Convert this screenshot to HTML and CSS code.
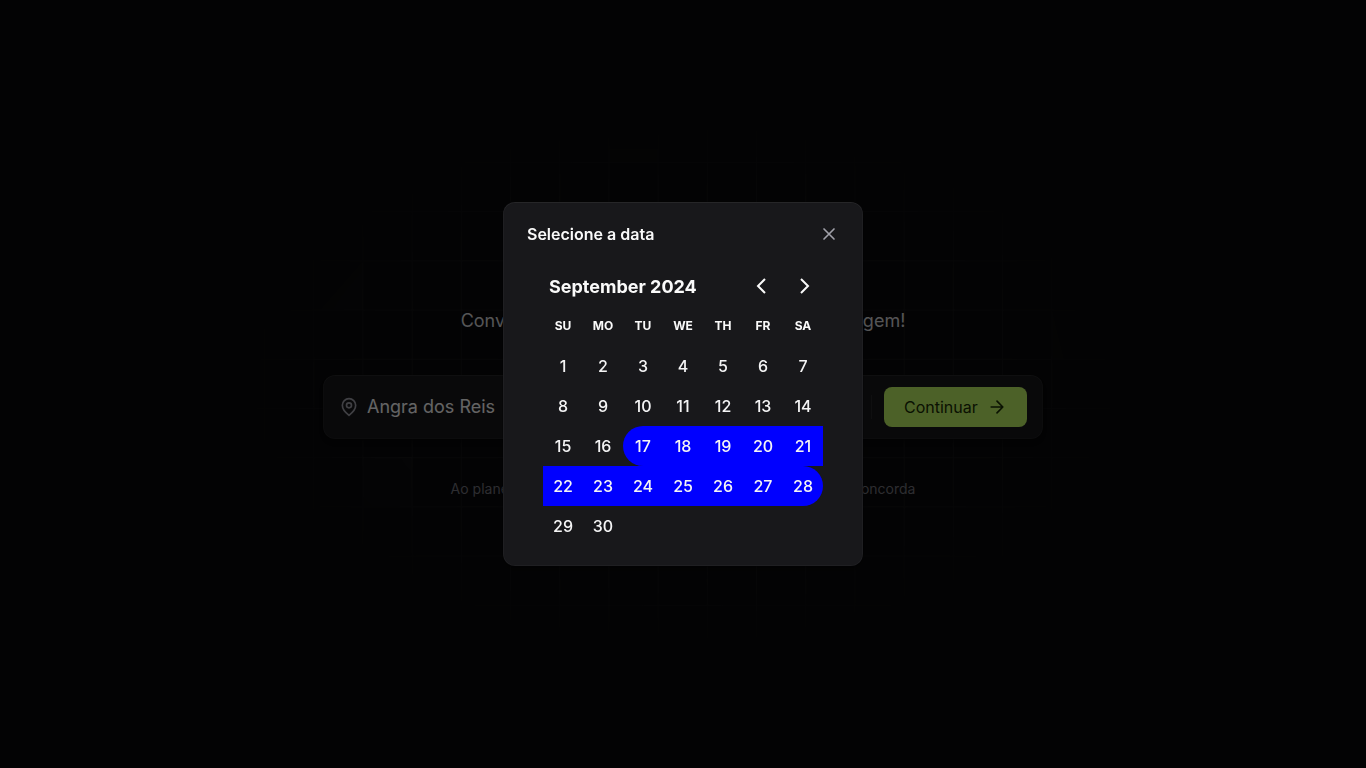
FILE: index.html
```html
<!DOCTYPE html>
<html lang="pt-BR">
<head>
<meta charset="UTF-8">
<meta name="viewport" content="width=device-width, initial-scale=1">
<title>plann.er</title>
<link rel="stylesheet" href="styles.css">
</head>
<body>
<div class="page">
  <svg class="pattern" width="900" height="540" viewBox="0 0 900 540" aria-hidden="true">
    <defs>
      <pattern id="grid" width="49.2" height="49.2" patternUnits="userSpaceOnUse" x="31" y="48">
        <path d="M0.5 0V49.2M0 0.5H49.2" stroke="#fff" stroke-opacity=".045" fill="none"/>
      </pattern>
      <radialGradient id="fade"><stop offset=".65" stop-color="#fff"/><stop offset="1" stop-color="#000"/></radialGradient>
      <mask id="fade-mask"><rect width="900" height="540" fill="url(#fade)"/></mask>
    </defs>
    <g mask="url(#fade-mask)">
      <rect width="900" height="540" fill="url(#grid)"/>
      <path d="M376 35h49v13h-49zM130 147v49H87zM130 343h49v49h-49zM819 196l12 49h-12z" fill="#fff" fill-opacity=".02"/>
    </g>
  </svg>
  <main class="hero">
    <p class="lead">Convide seus amigos e planeje sua próxima viagem!</p>
    <form class="trip-bar">
      <label class="place">
        <svg class="icon" viewBox="0 0 24 24" aria-hidden="true"><path d="M20 10c0 6-8 12-8 12s-8-6-8-12a8 8 0 0 1 16 0Z"/><circle cx="12" cy="10" r="3"/></svg>
        <input class="place-input" type="text" aria-label="Para onde você vai?" value="Angra dos Reis">
      </label>
      <span class="divider"></span>
      <button class="continue" type="button">Continuar
        <svg class="icon" viewBox="0 0 24 24" aria-hidden="true"><path d="M5 12h14M12 5l7 7-7 7"/></svg>
      </button>
    </form>
    <p class="terms">Ao planejar sua viagem pela plann.er você automaticamente concorda</p>
  </main>
</div>
<div class="overlay">
  <section class="dialog" role="dialog" aria-modal="true" aria-labelledby="dialog-title">
    <header class="dialog-head">
      <h2 class="dialog-title" id="dialog-title">Selecione a data</h2>
      <button class="close" type="button" aria-label="Fechar"><svg class="icon" viewBox="0 0 24 24" aria-hidden="true"><path d="M18 6 6 18M6 6l12 12"/></svg></button>
    </header>
    <div class="calendar">
      <div class="month-bar">
        <h3 class="month" id="month">September 2024</h3>
        <button class="nav" type="button" aria-label="Previous month"><svg class="chevron" viewBox="0 0 24 24"><path d="M14 5l-7 7 7 7"/></svg></button>
        <button class="nav" type="button" aria-label="Next month"><svg class="chevron" viewBox="0 0 24 24"><path d="M10 5l7 7-7 7"/></svg></button>
      </div>
      <table class="days" aria-labelledby="month">
        <thead><tr><th>SU</th><th>MO</th><th>TU</th><th>WE</th><th>TH</th><th>FR</th><th>SA</th></tr></thead>
        <tbody>
          <tr><td><button class="day">1</button></td><td><button class="day">2</button></td><td><button class="day">3</button></td><td><button class="day">4</button></td><td><button class="day">5</button></td><td><button class="day">6</button></td><td><button class="day">7</button></td></tr>
          <tr><td><button class="day">8</button></td><td><button class="day">9</button></td><td><button class="day">10</button></td><td><button class="day">11</button></td><td><button class="day">12</button></td><td><button class="day">13</button></td><td><button class="day">14</button></td></tr>
          <tr><td><button class="day">15</button></td><td><button class="day">16</button></td><td class="picked first"><button class="day">17</button></td><td class="picked"><button class="day">18</button></td><td class="picked"><button class="day">19</button></td><td class="picked"><button class="day">20</button></td><td class="picked"><button class="day">21</button></td></tr>
          <tr><td class="picked"><button class="day">22</button></td><td class="picked"><button class="day">23</button></td><td class="picked"><button class="day">24</button></td><td class="picked"><button class="day">25</button></td><td class="picked"><button class="day">26</button></td><td class="picked"><button class="day">27</button></td><td class="picked last"><button class="day">28</button></td></tr>
          <tr><td><button class="day">29</button></td><td><button class="day">30</button></td><td></td><td></td><td></td><td></td><td></td></tr>
        </tbody>
      </table>
    </div>
  </section>
</div>
</body>
</html>
```
FILE: styles.css
```css
*, *::before, *::after { box-sizing: border-box; }
body {
  margin: 0;
  background: #09090b;
  color: #fafafa;
  font: 16px/24px Inter, "Liberation Sans", sans-serif;
}
h2, h3, p { margin: 0; }
button, input { font: inherit; color: inherit; background: none; border: 0; padding: 0; margin: 0; }
button { cursor: pointer; }
.icon { width: 20px; height: 20px; fill: none; stroke: currentColor; stroke-width: 2; stroke-linecap: round; stroke-linejoin: round; }
.page { display: grid; place-items: center; min-height: 100vh; overflow: hidden; }
.pattern, .hero { grid-area: 1 / 1; }
.hero {
  display: flex;
  flex-direction: column;
  gap: 40px;
  width: 100%;
  max-width: 768px;
  padding: 58px 24px 20px;
  text-align: center;
  z-index: 1;
}
.lead { color: #d4d4d8; font-size: 18px; line-height: 28px; }
.trip-bar {
  display: flex;
  align-items: center;
  gap: 12px;
  height: 64px;
  padding: 0 16px;
  border-radius: 12px;
  background: #18181b;
}
.trip-bar, .dialog {
  box-shadow: 0 8px 8px rgba(0,0,0,.1), 0 4px 4px rgba(0,0,0,.1), 0 2px 2px rgba(0,0,0,.1), 0 0 0 1px rgba(0,0,0,.1), inset 0 0 0 1px rgba(255,255,255,.03), inset 0 1px 0 rgba(255,255,255,.03);
}
.place { display: flex; flex: 1; align-items: center; gap: 8px; color: #a1a1aa; }
.place-input { flex: 1; min-width: 0; color: #fafafa; font-size: 18px; line-height: 28px; outline: none; }
.divider { width: 1px; height: 24px; background: #27272a; }
.continue {
  display: flex;
  align-items: center;
  justify-content: space-between;
  gap: 8px;
  min-width: 143px;
  height: 40px;
  padding: 0 20px;
  border-radius: 8px;
  background: #bef264;
  color: #1a2e05;
}
.terms { color: #71717a; font-size: 14px; line-height: 20px; }
.overlay {
  position: fixed;
  inset: 0;
  z-index: 2;
  display: flex;
  align-items: center;
  justify-content: center;
  background: rgba(0,0,0,.6);
}
.dialog { padding: 20px 24px; border-radius: 12px; background: #18181b; }
.dialog-head { display: flex; align-items: center; justify-content: space-between; }
.dialog-title { font-size: 16px; line-height: 24px; font-weight: 600; }
.close { display: flex; padding: 0; color: #a1a1aa; }
.calendar { margin: 20px 16px 0; }
.month-bar { display: flex; align-items: center; height: 40px; }
.month { flex: 1; padding: 2px 0 0 6px; font-size: 18px; line-height: 28px; font-weight: 700; }
.nav { display: grid; place-items: center; width: 40px; height: 40px; }
.chevron { width: 24px; height: 24px; fill: none; stroke: currentColor; stroke-width: 2; }
.days { border-collapse: collapse; }
.days th { width: 40px; height: 40px; padding: 0; font-size: 12px; line-height: 16px; font-weight: 700; }
.days td { width: 40px; height: 40px; padding: 0; }
.day { display: block; width: 40px; height: 40px; font-weight: 500; color: #f4f4f5; }
.picked { background: #00f; }
.first { border-radius: 20px 0 0 20px; }
.last { border-radius: 0 20px 20px 0; }
```
